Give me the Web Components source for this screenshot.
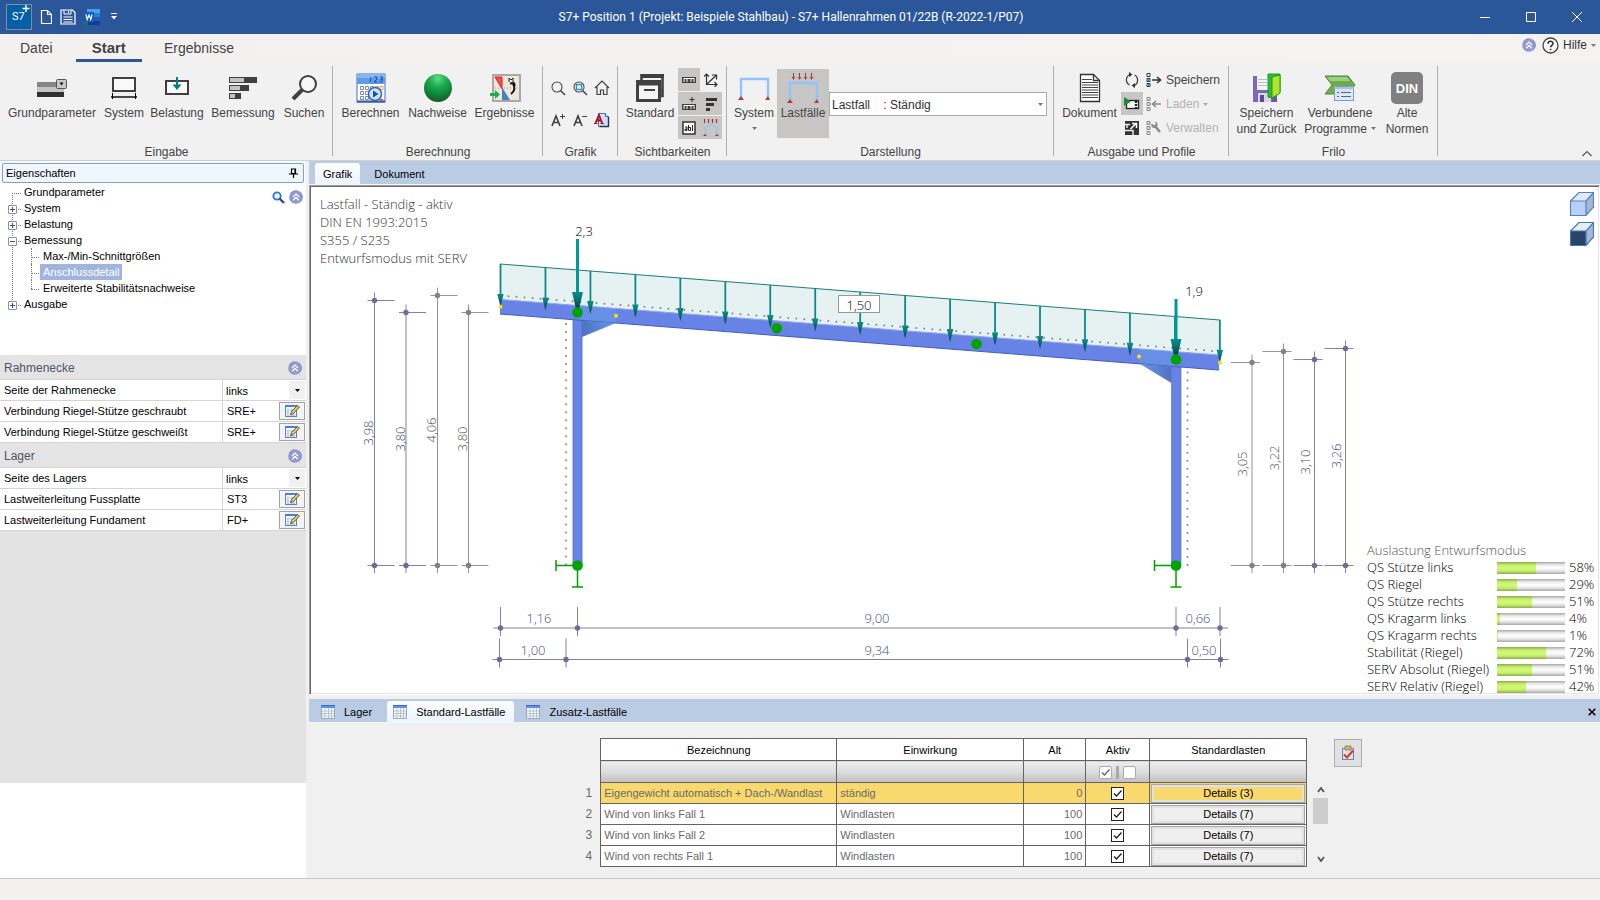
<!DOCTYPE html>
<html lang="de">
<head>
<meta charset="utf-8">
<title>S7+ Position 1 (Projekt: Beispiele Stahlbau) - S7+ Hallenrahmen 01/22B (R-2022-1/P07)</title>
<style>
html, body { margin: 0; height: 100%; background: #f0f0f0; }
body { font-family: "Liberation Sans", Arial, sans-serif; font-size: 11px; color: #000; }
</style>
</head>
<body>
<frilo-app></frilo-app>

<script>
/* ---------- icon registry: [width, height, markup] ---------- */
const ICONS = {
  app: [26, 26, `<rect x=".5" y=".5" width="25" height="25" fill="#0060aa" stroke="#8a8a86"/>
    <path d="M20 1v7M16.500 4.500h7" stroke="#fff" stroke-width="1.400"/>`],
  newdoc: [12, 16, `<path d="M1.500 1.500h6l4 4v9h-10zM7.500 1.500v4h4" fill="none" stroke="#fff" stroke-width="1.200"/>`],
  save: [16, 16, `<path d="M1 1h11.500l2.500 2.500v11.500h-14z" fill="none" stroke="#fff" stroke-width="1.200"/><path d="M4 1v4h7v-4M8.500 2v2M3.500 8h9M3.500 10.500h9M3.500 13h9" fill="none" stroke="#fff"/>`],
  word: [16, 16, `<path d="M3 0h13v4H3z" fill="#41a5ee"/><path d="M3 4h13v4H3z" fill="#2b7cd3"/><path d="M3 8h13v4H3z" fill="#185abd"/><path d="M3 12h13v4H3z" fill="#103f91"/><path d="M0 3h10v10H0z" fill="#185abd"/><path d="M2 5.500l1.200 5L5 6l1.800 4.500L8 5.500" fill="none" stroke="#fff" stroke-width="1.200"/><path d="M0 13h4v3H0z" fill="#0f7c6a"/>`],
  more: [6, 8, `<path d="M0 .5h6" stroke="#fff"/><path d="M0 3h6L3 6.500z" fill="#fff"/>`],
  min: [10, 10, `<path d="M0 5.500h10" stroke="#fff"/>`],
  max: [10, 10, `<path d="M.5.500h9v9h-9z" fill="none" stroke="#fff"/>`],
  close: [10, 10, `<path d="M0 0l10 10M10 0L0 10" stroke="#fff"/>`],
  up2: [14, 14, `<circle cx="7" cy="7" r="6.800" fill="#9699cd"/><circle cx="7" cy="7" r="6.200" fill="none" stroke="#6c9ad0" stroke-dasharray="6 5"/><path d="M4 7L7 4l3 3M4 10.300L7 7.300l3 3" fill="none" stroke="#fff" stroke-width="1.200"/>`],
  help: [17, 17, `<circle cx="8.500" cy="8.500" r="7.500" fill="#fdfdfd" stroke="#444" stroke-width="1.300"/><path d="M6 6.700C6 3.500 11 3.500 11 6.500 11 8.300 8.600 8.300 8.600 10.300M8.600 11.700v1.500" fill="none" stroke="#333" stroke-width="1.600"/>`],
  caret: [5, 3, `<path d="M0 0h5L2.500 3z" fill="#777"/>`],
  caretlight: [5, 3, `<path d="M0 0h5L2.500 3z" fill="#aaa"/>`],
  caretblack: [5, 3, `<path d="M0 0h5L2.500 3z" fill="#000"/>`],
  collapse: [12, 7, `<path d="M1.500 6L6 1.500 10.500 6" fill="none" stroke="#555" stroke-width="1.200"/>`],
  grund: [32, 20, `<path d="M1 4h27v5H1z" fill="#868686"/><path d="M1 9h27v5H1z" fill="#c4c4c4"/><path d="M1 14h27v5H1z" fill="#303030"/><rect x="20.500" y="1.500" width="10" height="9" rx="1" fill="#c8c8c8" stroke="#555"/><path d="M23.500 4.500h4l-2 3z" fill="#111"/>`],
  system: [28, 24, `<rect x="3" y="2" width="22" height="13" fill="#fafafa" stroke="#404040" stroke-width="2"/><path d="M1 21h26" stroke="#000" stroke-width="1.400"/><path d="M2.500 17v6M25.500 17v6" stroke="#000"/>`],
  belastung: [26, 24, `<rect x="2" y="5" width="22" height="13" fill="#fafafa" stroke="#404040" stroke-width="2"/><path d="M13 1v9" stroke="#00807c" stroke-width="2"/><path d="M8.500 8.500h9L13 14z" fill="#00807c"/>`],
  bemessung: [30, 24, `<rect x="1" y="1" width="28" height="6" fill="#404040"/><rect x="2" y="2" width="14" height="4" fill="#c4c4c4"/><rect x="1" y="9" width="20" height="6" fill="#404040"/><rect x="2" y="10" width="10" height="4" fill="#c4c4c4"/><rect x="1" y="17" width="12" height="6" fill="#404040"/><rect x="2" y="18" width="5" height="4" fill="#c4c4c4"/>`],
  suchen: [28, 28, `<circle cx="18" cy="10" r="8" fill="#f6f6f6" stroke="#404040" stroke-width="2"/><path d="M12.500 15.500L3 25" stroke="#404040" stroke-width="4"/>`],
  berechnen: [30, 30, `<rect x="1" y="1" width="28" height="28" fill="#fff" stroke="#3f73c4"/><rect x="1" y="1" width="28" height="10" fill="#5f9be8"/><rect x="1" y="1" width="28" height="4" fill="#86b6f0"/><path d="M1 28.500h28" stroke="#2d5fa8" stroke-width="2"/><path d="M15 4l-1 5M18 4h3v2l-3 3h3M24 4h3l-2 2.500h1.500l-1 2.500h-2" fill="none" stroke="#1d4f9c"/>
    <g fill="#fff" stroke="#7c8ca8"><path d="M4.500 13.500h3v3h-3zM9.500 13.500h3v3h-3zM14.500 13.500h3v3h-3zM4.500 18.500h3v3h-3zM9.500 18.500h3v3h-3zM4.500 23.500h3v3h-3zM9.500 23.500h3v3h-3z"/></g><path d="M19.500 13.500h3v3h-3zM24 13.500h3v3h-3z" fill="#fff" stroke="#e8a04c"/><circle cx="19" cy="21" r="6.500" fill="#cfe3fa" stroke="#2c6abf" stroke-width="1.500"/><path d="M17 17.500l5.500 3.500-5.500 3.500z" fill="#164f9e"/><path d="M24 26h3v1.500h-3z" fill="#d33"/>`],
  nachweise: [30, 30, `<defs><radialGradient id="g" cx=".5" cy=".15" r=".9"><stop offset="0" stop-color="#5fdc84"/><stop offset=".35" stop-color="#1bab4e"/><stop offset=".75" stop-color="#0d7a35"/><stop offset="1" stop-color="#2a4a1a"/></radialGradient></defs><circle cx="15" cy="15" r="14" fill="url(#g)"/>`],
  ergebnisse: [32, 30, `<rect x="4" y="2" width="27" height="26" fill="#ece7da" stroke="#a9a9a9" stroke-width="2"/><path d="M6 4h7v12z" fill="#ff4a4a" stroke="#c22"/><path d="M13 14v13h8z" fill="#4b82bd"/><path d="M3 15h27" stroke="#999" stroke-dasharray="1 2"/><path d="M20 9V5l2 2 2-2v4" fill="none" stroke="#222"/><path d="M24 11q3.500 6-2 10M21 10.500l4-.5 1 3" fill="none" stroke="#111" stroke-width="1.800"/><path d="M1 20h5v-3l5 4.500-5 4.500v-3H1z" fill="#1fae4f"/>`],
  mag: [15, 15, `<circle cx="6" cy="6" r="5" fill="none" stroke="#4a4a4a" stroke-width="1.100"/><path d="M9.500 9.500l4.500 4.500" stroke="#4a4a4a" stroke-width="1.600"/>`],
  magfit: [15, 15, `<circle cx="6" cy="6" r="5" fill="none" stroke="#4a4a4a" stroke-width="1.100"/><path d="M9.500 9.500l4.500 4.500" stroke="#4a4a4a" stroke-width="1.600"/><rect x="3.500" y="3.500" width="5" height="5" fill="#fff" stroke="#2090d0" stroke-width="1.400"/>`],
  home: [16, 16, `<path d="M1 8l7-7 7 7M3 7v7.500h3.500V10h3v4.500H13V7" fill="none" stroke="#404040" stroke-width="1.200"/>`],
  aplus: [14, 14, `<path d="M1 13L5 3l4 10M2.500 9.500h5" fill="none" stroke="#404040" stroke-width="1.600"/><path d="M11.500 1v5M9 3.500h5" stroke="#404040"/>`],
  aminus: [14, 14, `<path d="M1 13L5 3l4 10M2.500 9.500h5" fill="none" stroke="#404040" stroke-width="1.600"/><path d="M9 3.500h5" stroke="#404040"/>`],
  adoc: [16, 16, `<path d="M4.500 1.500h7l3 3v10h-10z" fill="#cfdff6" stroke="#5874ac"/><path d="M11.500 1.500v3h3" fill="#fff" stroke="#4464a0"/><path d="M14.500 5v9.500h-9" fill="none" stroke="#1f3568" stroke-width="1.400"/><path d="M1.500 11L5 3l3 8M3 8.500h4" fill="none" stroke="#a8141c" stroke-width="1.800"/><path d="M0 11.500h3.500M6.500 11.500H10" stroke="#a8141c"/>`],
  standard: [30, 30, `<path d="M6 2h23M6 4h23" stroke="#404040" stroke-width="2"/><path d="M6.500 1v6M27.500 1v22h-3" fill="none" stroke="#404040" stroke-width="2.600"/><rect x="2.500" y="8.500" width="22" height="19" fill="#f4f4f4" stroke="#404040" stroke-width="3"/><path d="M2 11h23" stroke="#404040" stroke-width="3"/><path d="M8 6.500h17" stroke="#f4f4f4"/><path d="M9 17h11" stroke="#404040" stroke-width="2"/>`],
  ruler: [14, 6, `<rect x="0" y="0" width="14" height="6" fill="#404040"/><path d="M1.500 1.500h11M2 5V2M5 5V2M9 5V2M12 5V2" stroke="#fff"/>`],
  rulerplus: [14, 14, `<rect x="0" y="7" width="14" height="6" fill="#404040"/><path d="M1.500 8.500h11M2 12V9M5 12V9M9 12V9M12 12V9" stroke="#fff"/><path d="M10 0v5M7.500 2.500h5" stroke="#333"/>`],
  axes: [14, 14, `<path d="M2.500 1v10.500h10M3 11L12 2.500M0 3.500L2.500 1 5 3.500M10.500 9l2.500 2.500L10.500 14M8 2h4.500v4.500" fill="none" stroke="#333" stroke-width="1.200"/>`],
  bars: [14, 14, `<path d="M2 1h11v3H2zM2 6h8v3H2zM2 11h4v3H2z" fill="#333"/>`],
  abl: [14, 14, `<rect x="1" y="1" width="12" height="12" fill="#fff" stroke="#333" stroke-width="1.500"/><path d="M3 6h2v3.500H3V8h2M6.500 4v5.500h2V6.500h-2M10.500 4v6" fill="none" stroke="#222"/>`],
  frameload: [18, 18, `<path d="M3.500 16V8.500L9 5.500l5.500 3V16" fill="none" stroke="#8ec4f5" stroke-width="1.400"/><path d="M2.500 0v4M6.500 0v4M10.500 0v4M14.500 0v4" stroke="#a33" stroke-width="1.200"/><path d="M3 15l2 2H1zM15 15l2 2h-4z" fill="#a33"/>`],
  sysframe: [32, 32, `<path d="M3 27V7h27v20" fill="none" stroke="#90c5fa" stroke-width="2.400"/><path d="M3 24l3 4H0zM30 24l2 4h-5z" fill="#b43c3c"/>`],
  lastframe: [32, 34, `<path d="M3 29V11h27v18" fill="none" stroke="#90c5fa" stroke-width="2.400"/><path d="M3 27l3 4H0zM30 27l2 4h-5z" fill="#b43c3c"/><path d="M6.500 1v6M12.500 1v6M18.500 1v6M24.500 1v6" stroke="#8e3a3a"/><path d="M4.500 5h4l-2 3zM10.500 5h4l-2 3zM16.500 5h4l-2 3zM22.500 5h4l-2 3z" fill="#b04848"/>`],
  dokument: [22, 30, `<path d="M1.500 1.500h13l6 6v21h-19z" fill="#fff" stroke="#333" stroke-width="1.300"/><path d="M14.500 1.500v6h6" fill="none" stroke="#333" stroke-width="1.300"/><path d="M3 6.500h10M3 9.500h16M3 12h16M3 14.500h16M3 17h16M3 19.500h16M3 22h16M3 24.500h16" stroke="#444"/>`],
  refresh: [14, 16, `<path d="M5 2.500A5.800 5.800 0 0 0 4.500 13M9 13.500A5.800 5.800 0 0 0 9.500 3" fill="none" stroke="#404040" stroke-width="1.300"/><path d="M4 0l3.500 2.500L4 5zM10 11L6.500 13.500 10 16z" fill="#333"/>`],
  film: [16, 14, `<rect x="2.500" y="3.500" width="12" height="8" fill="#fafafa" stroke="#222" stroke-width="1.300"/><path d="M12 4v7" stroke="#222" stroke-dasharray="2 1" stroke-width="2.400"/><path d="M0 0l7 4.500L0 9z" fill="#1c8a2c"/>`],
  expand: [14, 14, `<path d="M0 0h14v14H0z" fill="#333"/><path d="M0 3.500h5M2 3.500V7M4 9.500h4V14M0 9.500h4" fill="none" stroke="#eee" stroke-width="1.400"/><path d="M5.500 8L11 2.500M7 2.500h4.500V7" fill="none" stroke="#fff" stroke-width="1.500"/>`],
  pfsave: [16, 14, `<path d="M1 .500h3v3H1zM1 5.500h3v3H1zM1 10.500h3v3H1z" fill="#fff" stroke="#333"/><path d="M1.500 6h2v2h-2zM1.500 11h2v2h-2z" fill="#2aa4e8"/><path d="M6 7h8M11 4l3.500 3-3.500 3" fill="none" stroke="#333" stroke-width="1.600"/>`],
  pfload: [16, 14, `<path d="M1 .500h3v3H1zM1 5.500h3v3H1zM1 10.500h3v3H1z" fill="#ddd" stroke="#8a8a8a"/><path d="M7 7h8M10 4L6.500 7l3.500 3" fill="none" stroke="#8a8a8a" stroke-width="1.600"/>`],
  pfmanage: [16, 14, `<path d="M1 .500h3v3H1zM1 5.500h3v3H1zM1 10.500h3v3H1z" fill="#ddd" stroke="#8a8a8a"/><path d="M9 5l5 6" stroke="#8a8a8a" stroke-width="2.500"/><path d="M6 2.500L8 4.500 10 2.500 8.500.500q3 0 3 3.500T8 7 5.500 3z" fill="#8a8a8a"/>`],
  saveback: [30, 30, `<path d="M1 3h19v26H1z" fill="#7d68b6"/><path d="M20 14h5v15h-5z" fill="#6a57a6"/><rect x="5" y="3" width="12" height="14" fill="#f4f4f8"/><path d="M6 6.500h9M6 9.500h9M6 12.500h9" stroke="#bbb"/><rect x="6" y="20" width="13" height="9" fill="#d6d6e0"/><rect x="8" y="22" width="4" height="7" fill="#5a4a90"/><path d="M16 1h12v18l-7 6-5-1z" fill="#2dbb36" stroke="#12a020"/><path d="M20 4l8-2v18l-8 5z" fill="#b6e32a" stroke="#12a020"/>`],
  verbund: [34, 28, `<path d="M2 2h23l7 9-7 9H2l7-9z" fill="#6cab4e" stroke="#4b8a38"/><path d="M4 3h20l3 4H7z" fill="#9fd07e"/><rect x="11.500" y="12.500" width="19" height="14" fill="#dfeaf6" fill-opacity=".93" stroke="#7b9cc4"/><path d="M11.500 14h19" stroke="#a9c2e0" stroke-width="2"/><path d="M14 18.500h2M18 18.500h10M14 22.500h2M18 22.500h10" stroke="#4a6a9a"/>`],
  din: [32, 32, `<rect x="0" y="0" width="32" height="32" rx="5" fill="#808080"/>`],
  pin: [9, 10, `<path d="M2.500 1h4v4.500h-4zM0 6h9M4.500 6v4" fill="none" stroke="#000" stroke-width="1.200"/><path d="M6 1v5" stroke="#000"/>`],
  find: [13, 13, `<circle cx="5" cy="5" r="3.700" fill="#eaf4ff" stroke="#2c7cc0" stroke-width="1.800"/><path d="M7.500 7.500l4.500 4.500" stroke="#1f4fa0" stroke-width="2.400"/>`],
  edit: [18, 14, `<rect x="2.500" y="1.500" width="11" height="11" fill="#eef4fc" stroke="#5c83c4"/><path d="M2 1h12v2H2z" fill="#4a7fd8"/><path d="M4 6h2M4 8.500h2M4 11h2M7 6h4M7 11h5" stroke="#8aa8d8"/><path d="M7.500 10.500l1-3 6-6 2 1.500-6 6.500z" fill="#e8c46a" stroke="#4a3a20" stroke-width=".8"/>`],
  table: [14, 14, `<rect x=".5" y=".5" width="13" height="13" fill="#fff" stroke="#9aa8c0"/><path d="M0 0h14v3H0z" fill="#5f92e8"/><path d="M0 0h14v1H0z" fill="#3b6cc8"/><path d="M4 3v10M7.500 3v10M10.500 3v10M1 6h12M1 8.500h12M1 11h12" stroke="#b4c2d8"/>`],
  xblack: [8, 8, `<path d="M.7.700l6.600 6.600M7.300.700L.7 7.300" stroke="#000" stroke-width="1.600"/>`],
  clip: [14, 16, `<rect x="1.500" y="3.500" width="11" height="11" fill="#d8e4f6" stroke="#6a86be"/><path d="M4 1h6v4H4z" fill="#c8b27a" stroke="#8a7a4a" stroke-width=".8"/><path d="M3 9.500l3 3 6-7" fill="none" stroke="#e03818" stroke-width="2"/>`],
  sup: [8, 6, `<path d="M1 5l3-4 3 4" fill="none" stroke="#555" stroke-width="1.800"/>`],
  sdown: [8, 6, `<path d="M1 1l3 4 3-4" fill="none" stroke="#555" stroke-width="1.800"/>`],
  cube: [24, 24, `<path d="M1 9L9 1h15l-8 8z" fill="#e4e9f8"/><path d="M16 9l8-8v14l-8 8z" fill="#a9b4d4"/><path d="M1 9h15v14H1z" fill="#b9d0ff"/><path d="M.5 9L9 .5h14.500V15L16 23.500H.5zM.5 9H16M16 23.500V9L23.500.5" fill="none" stroke="#4a86c4" stroke-width="1.200"/>`],
  cubedark: [24, 24, `<path d="M1 9L9 1h15l-8 8z" fill="#e4edfa"/><path d="M16 9l8-8v14l-8 8z" fill="#a9b4d4"/><path d="M1 9h15v14H1z" fill="#2a4468"/><path d="M.5 9L9 .5h14.500V15L16 23.500H.5zM.5 9H16M16 23.500V9L23.500.5" fill="none" stroke="#3f7ab8" stroke-width="1.200"/>`]
};

const shadow = (el, css, html) => {
  const t = document.createElement('template');
  t.innerHTML = `<style>*{box-sizing:border-box}[hidden]{display:none}button,select,input{font:inherit;color:inherit;margin:0}${css}</style>${html}`;
  el.attachShadow({ mode: 'open' }).append(t.content.cloneNode(true));
};

class FriloIcon extends HTMLElement {
  connectedCallback() {
    if (this.shadowRoot) return;
    const [w, h, body] = ICONS[this.getAttribute('name')];
    shadow(this, `:host{display:inline-flex;flex:none}svg{display:block}`,
      `<svg width="${w}" height="${h}" viewBox="0 0 ${w} ${h}" aria-hidden="true">${body}</svg>`);
  }
}

class FriloTitlebar extends HTMLElement {
  constructor() {
    super();
    shadow(this, `
      :host{display:grid;grid-template-columns:1fr auto 1fr;align-items:center;height:34px;background:#2b579a;color:#fff;
        font:12px Roboto,"Open Sans",sans-serif}
      .quick{display:flex;align-items:center;gap:8px;padding-left:6px}
      button{display:flex;align-items:center;justify-content:center;border:0;padding:0;background:none}
      .app{display:grid}.app>*{grid-area:1/1}
      .app span{z-index:1;place-self:center start;padding-left:6px;font-size:11px;line-height:16px}
      .more{margin-left:3px}
      .win{display:flex;justify-content:flex-end}.win button{width:46px;height:34px}
      h1{margin:0 18px 0 0;font:inherit;white-space:nowrap}`,
      `<div class="quick"><div class="app"><frilo-icon name="app"></frilo-icon><span>S7</span></div>
        <button aria-label="Neu"><frilo-icon name="newdoc"></frilo-icon></button>
        <button aria-label="Speichern"><frilo-icon name="save"></frilo-icon></button>
        <button aria-label="Word"><frilo-icon name="word"></frilo-icon></button>
        <button class="more" aria-label="Anpassen"><frilo-icon name="more"></frilo-icon></button></div>
      <h1><slot></slot></h1>
      <div class="win"><button aria-label="Minimieren"><frilo-icon name="min"></frilo-icon></button>
        <button aria-label="Maximieren"><frilo-icon name="max"></frilo-icon></button>
        <button aria-label="Schließen"><frilo-icon name="close"></frilo-icon></button></div>`);
  }
}

class FriloMenu extends HTMLElement {
  constructor() {
    super();
    shadow(this, `
      :host{display:flex;height:28px;padding-left:5px;background:linear-gradient(90deg,#f3f1f0,#f5f3f2);color:#444;font-size:14px}
      nav{display:flex;flex:1}
      a{display:block;padding:0 15px;line-height:29px;color:inherit;text-decoration:none}
      a.on{margin:0 7px 0 8px;font-weight:bold;font-size:15px;padding:0 16px;border-bottom:3px solid #2b579a;line-height:28px;height:28px}
      .help{display:flex;align-items:center;gap:6px;padding:0 4px 6px 0;font-size:12px;color:#333}
      button{display:flex;align-items:center;gap:4px;border:0;padding:0;background:none}`,
      `<nav><a href="#datei">Datei</a><a class="on" href="#start">Start</a><a href="#ergebnisse">Ergebnisse</a></nav>
      <div class="help"><button aria-label="Einklappen"><frilo-icon name="up2"></frilo-icon></button>
      <button><frilo-icon name="help"></frilo-icon>Hilfe<frilo-icon name="caret"></frilo-icon></button></div>`);
  }
}

/* A labelled block of ribbon commands with a rule on its right */
class FriloGroup extends HTMLElement {
  constructor() {
    super();
    shadow(this, `
      :host{display:grid;flex:none;grid-template-rows:78px 16px;color:#444;
        background:linear-gradient(#b0b0b0,#b0b0b0) right top/1px 90px no-repeat}
      .row{display:flex;align-items:flex-start;padding:0 4px}
      .cap{text-align:center;line-height:16px}`,
      `<div class="row"><slot></slot></div><div class="cap"></div>`);
    this.shadowRoot.querySelector('.cap').textContent = this.getAttribute('label');
  }
}

/* Large ribbon command: icon over one or two lines of text */
class FriloCommand extends HTMLElement {
  constructor() {
    super();
    shadow(this, `
      :host{display:block;flex:none;margin-top:3px}
      button{display:flex;flex-direction:column;align-items:center;width:100%;height:69px;border:0;padding:3px 0 0;background:none;white-space:nowrap}
      :host([pressed]) button{background:#c8c6c4}
      .ico{display:grid;place-items:center;height:32px;margin-bottom:1px}
      .ico>*{grid-area:1/1}.ico span{z-index:1;color:#fff;font-weight:bold;font-size:13px}
      .txt{line-height:16px;text-align:center}
      .drop{padding-top:6px;line-height:3px}`,
      `<button><span class="ico"><frilo-icon name="${this.getAttribute('icon')}"></frilo-icon>${this.hasAttribute('mark') ? `<span>${this.getAttribute('mark')}</span>` : ''}</span>
       <span class="txt"><slot></slot></span>${this.hasAttribute('drop') ? '<frilo-icon class="drop" name="caret"></frilo-icon>' : ''}</button>`);
  }
}

/* Grid of small icon buttons */
class FriloTools extends HTMLElement {
  constructor() {
    super();
    const cells = this.getAttribute('icons').split(' ').map(s => {
      const on = s.endsWith('*');
      const n = s.replace('*', '');
      return `<button aria-label="${n}" ${on ? 'aria-pressed="true"' : ''}><frilo-icon name="${n}"></frilo-icon></button>`;
    }).join('');
    shadow(this, `
      :host{display:grid;flex:none;grid-template-columns:repeat(var(--cols),22px);grid-auto-rows:23px;row-gap:1px;padding-top:2px}
      :host([loose]){grid-auto-rows:32px;row-gap:0;padding-top:6px}
      button{display:grid;place-items:center;border:0;padding:0;background:none}
      [aria-pressed]{background:#c8c6c4}`, cells);
  }
}

class FriloRibbon extends HTMLElement {
  constructor() {
    super();
    shadow(this, `
      :host{display:flex;height:99px;padding-top:4px;background:#f1f1f1;border-bottom:1px solid #d2d0ce;font-size:12px}
      .w1{width:333px}.w2{width:210px}.w3{width:75px}.w4{width:109px}.w5{width:327px}.w6{width:175px}.w7{width:209px}
      .choice{display:grid;align-items:center;width:218px;height:24px;margin-top:26px;color:#333}
      .choice>*{grid-area:1/1}
      select{width:100%;height:24px;border:1px solid #ababab;background:#fff;padding:1px 2px 0;appearance:none}
      .choice frilo-icon{justify-self:end;margin-right:4px;pointer-events:none}
      .profile{display:grid;grid-auto-rows:24px;padding:2px 0 0 3px}
      .profile button{display:flex;align-items:center;gap:4px;border:0;padding:0;background:none}
      .profile button:disabled{color:#b4b2b0}
      .fold{display:flex;align-items:flex-end;justify-content:flex-end;flex:1;padding:0 7px 3px 0}
      .fold button{border:0;padding:0;background:none;display:flex}
      .inl{vertical-align:middle;margin:0 0 3px 4px}`,
      `<frilo-group class="w1" label="Eingabe">
        <frilo-command icon="grund" style="width:96px">Grundparameter</frilo-command>
        <frilo-command icon="system" style="width:48px">System</frilo-command>
        <frilo-command icon="belastung" style="width:58px">Belastung</frilo-command>
        <frilo-command icon="bemessung" style="width:74px">Bemessung</frilo-command>
        <frilo-command icon="suchen" style="width:48px">Suchen</frilo-command></frilo-group>
      <frilo-group class="w2" label="Berechnung">
        <frilo-command icon="berechnen" style="width:67px">Berechnen</frilo-command>
        <frilo-command icon="nachweise" style="width:67px">Nachweise</frilo-command>
        <frilo-command icon="ergebnisse" style="width:67px">Ergebnisse</frilo-command></frilo-group>
      <frilo-group class="w3" label="Grafik">
        <frilo-tools loose style="--cols:3" icons="mag magfit home aplus aminus adoc"></frilo-tools></frilo-group>
      <frilo-group class="w4" label="Sichtbarkeiten">
        <frilo-command icon="standard" style="width:56px">Standard</frilo-command>
        <frilo-tools style="--cols:2" icons="ruler* axes rulerplus* bars* abl* frameload*"></frilo-tools></frilo-group>
      <frilo-group class="w5" label="Darstellung">
        <frilo-command icon="sysframe" drop style="width:46px">System</frilo-command>
        <frilo-command icon="lastframe" pressed style="width:52px">Lastfälle</frilo-command>
        <div class="choice"><select aria-label="Lastfall"><option>Lastfall&nbsp;&nbsp;&nbsp; : Ständig</option></select><frilo-icon name="caret"></frilo-icon></div></frilo-group>
      <frilo-group class="w6" label="Ausgabe und Profile">
        <frilo-command icon="dokument" style="width:63px">Dokument</frilo-command>
        <frilo-tools style="--cols:1" icons="refresh film* expand"></frilo-tools>
        <div class="profile"><button><frilo-icon name="pfsave"></frilo-icon>Speichern</button>
          <button disabled><frilo-icon name="pfload"></frilo-icon>Laden<frilo-icon name="caretlight"></frilo-icon></button>
          <button disabled><frilo-icon name="pfmanage"></frilo-icon>Verwalten</button></div></frilo-group>
      <frilo-group class="w7" label="Frilo">
        <frilo-command icon="saveback" style="width:67px">Speichern<br>und Zurück</frilo-command>
        <frilo-command icon="verbund" style="width:80px">Verbundene<br>Programme<frilo-icon class="inl" name="caret"></frilo-icon></frilo-command>
        <frilo-command icon="din" mark="DIN" style="width:54px">Alte<br>Normen</frilo-command></frilo-group>
      <div class="fold"><button aria-label="Menüband reduzieren"><frilo-icon name="collapse"></frilo-icon></button></div>`);
  }
}

class FriloTree extends HTMLElement {
  constructor() {
    super();
    shadow(this, `
      :host{display:flex;align-items:flex-start;height:172px;padding:1px 3px 0 0;background:#fff}
      ul{list-style:none;margin:0;padding:0 0 0 12px;flex:1}
      li{position:relative;padding-left:12px;line-height:16px;white-space:nowrap}
      li::before{content:"";position:absolute;left:0;top:9px;width:9px;border-top:1px dotted #777}
      li::after{content:"";position:absolute;left:0;top:9px;bottom:-8px;border-left:1px dotted #777}
      li:last-child::after{display:none}
      ul ul{padding-left:7px}ul ul li::after{top:0;bottom:0}
      ul ul li:last-child::after{display:block;bottom:7px}
      ul ul li::before{width:8px}
      button{position:absolute;z-index:1;left:-4px;top:5px;width:9px;height:9px;border:1px solid #919191;border-radius:1px;padding:0;
        background:linear-gradient(#2f4f9f,#2f4f9f) center/5px 1px no-repeat,linear-gradient(#2f4f9f,#2f4f9f) center/1px 5px no-repeat,#fff}
      button.open{background:linear-gradient(#2f4f9f,#2f4f9f) center/5px 1px no-repeat,#fff}
      .sel{display:inline-block;margin-left:-3px;padding:0 3px;background:#9fb5dd;color:#fff}
      .tools{display:flex;align-items:center;gap:4px;padding-top:6px}
      .tools button{all:unset;display:flex}`,
      `<ul role="tree"><li role="treeitem">Grundparameter</li>
        <li role="treeitem"><button aria-label="Öffnen"></button>System</li>
        <li role="treeitem"><button aria-label="Öffnen"></button>Belastung</li>
        <li role="treeitem"><button class="open" aria-label="Schließen"></button>Bemessung
          <ul role="group"><li role="treeitem">Max-/Min-Schnittgrößen</li><li role="treeitem" aria-selected="true"><span class="sel">Anschlussdetail</span></li><li role="treeitem">Erweiterte Stabilitätsnachweise</li></ul></li>
        <li role="treeitem"><button aria-label="Öffnen"></button>Ausgabe</li></ul>
      <div class="tools"><button aria-label="Suchen"><frilo-icon name="find"></frilo-icon></button><button aria-label="Einklappen"><frilo-icon name="up2"></frilo-icon></button></div>`);
  }
}

/* Collapsible block of properties; rows are "label|value|kind", parted by semicolons */
class FriloProps extends HTMLElement {
  constructor() {
    super();
    const rows = this.getAttribute('rows').split(';').map((r, i) => {
      const [label, value, kind] = r.split('|');
      return kind === 'select'
        ? `<div class="r"><label for="f${i}">${label}</label><div class="v"><select id="f${i}"><option>${value}</option></select><span class="dd"><frilo-icon name="caretblack"></frilo-icon></span></div></div>`
        : `<div class="r"><span class="l">${label}</span><div class="v"><span class="t">${value}</span><button aria-label="${label} bearbeiten"><frilo-icon name="edit"></frilo-icon></button></div></div>`;
    }).join('');
    shadow(this, `
      :host{display:block}
      header{display:flex;align-items:center;justify-content:space-between;height:25px;padding:1px 4px 0;background:#e4e4e4;color:#4e5566;font-size:12px;border-bottom:1px solid #d4d4d4}
      header button{border:0;padding:0;background:none;display:flex}
      .r{display:grid;grid-template-columns:222px 1fr;height:21px;background:#fff;border-bottom:1px solid #d4d4d4;line-height:20px}
      label,.l{padding-left:4px;white-space:nowrap}
      .v{display:grid;grid-template-columns:1fr auto;border-left:1px solid #d4d4d4}
      .t{padding-left:4px}
      select{grid-area:1/1/2/3;appearance:none;border:0;background:none;padding:1px 0 0 3px;height:20px}
      .dd{grid-area:1/2;display:grid;place-items:center;width:16px;margin:1px;background:#f0f0f0;pointer-events:none}
      .v button{display:grid;place-items:center;width:26px;height:18px;margin:1px;border:1px solid #a0a0a0;background:#f4f4f4;padding:0;overflow:hidden}`,
      `<header><span>${this.getAttribute('label')}</span><button aria-label="Einklappen"><frilo-icon name="up2"></frilo-icon></button></header>${rows}`);
  }
}

class FriloSidebar extends HTMLElement {
  constructor() {
    super();
    shadow(this, `
      :host{display:flex;flex-direction:column;min-height:0;overflow:hidden;background:#e3e3e3}
      .head{background:#f5f9fe;padding:2px 2px 0}
      .head div{display:flex;align-items:center;justify-content:space-between;height:20px;border:1px solid #7da2ce;border-radius:2px;background:#eff6fd;padding:0 5px 0 3px}
      .head button{border:0;padding:0;background:none;display:flex}
      .rest{flex:1}.foot{height:95px;background:#fff}`,
      `<div class="head"><div><span>Eigenschaften</span><button aria-label="Anheften"><frilo-icon name="pin"></frilo-icon></button></div></div>
      <frilo-tree></frilo-tree>
      <frilo-props label="Rahmenecke" rows="Seite der Rahmenecke|links|select;Verbindung Riegel-Stütze geschraubt|SRE+;Verbindung Riegel-Stütze geschweißt|SRE+"></frilo-props>
      <frilo-props label="Lager" rows="Seite des Lagers|links|select;Lastweiterleitung Fussplatte|ST3;Lastweiterleitung Fundament|FD+"></frilo-props>
      <div class="rest"></div><div class="foot"></div>`);
  }
}

/* Tab strip: tabs given as "a,b,c", index of the open one in "open" */
class FriloTabs extends HTMLElement {
  constructor() {
    super();
    const open = +this.getAttribute('open');
    const icon = this.hasAttribute('icons') ? '<frilo-icon name="table"></frilo-icon>' : '';
    shadow(this, `
      :host{display:flex;align-items:flex-end;height:24px;background:#bacce4;border-bottom:1px solid #f4f6fa;padding:0 4px 0 6px}
      button{display:flex;align-items:center;gap:9px;height:21px;border:0;border-radius:3px 3px 0 0;padding:0 8px;margin-right:6px;background:none;line-height:16px}
      :host([icons]) button{padding:0 9px 0 6px;margin-right:6px}
      [aria-selected=true]{background:linear-gradient(#fcfdff,#edf4fc)}
      :host([icons]) .x{margin:0 0 0 auto;padding:0}`,
      this.getAttribute('tabs').split(',').map((t, i) => `<button role="tab" aria-selected="${i === open}">${icon}${t}</button>`).join('') +
      (icon ? '<button class="x" aria-label="Schließen"><frilo-icon name="xblack"></frilo-icon></button>' : ''));
  }
}

class FriloMeter extends HTMLElement {
  constructor() {
    super();
    const v = this.getAttribute('value');
    shadow(this, `
      :host{display:grid;grid-template-columns:130px 68px 28px;height:17px;align-items:center;line-height:17px;white-space:nowrap}
      .bar{height:12px;background:linear-gradient(#a8a8a8,#ececec 25%,#fff 50%,#e4e4e4 75%,#a8a8a8)}
      .bar i{display:block;height:12px;width:${v}%;background:linear-gradient(#8cab4a,#c5ee6c 25%,#d2fa7a 50%,#c5ee6c 75%,#8cab4a)}
      .p{padding-left:4px}`,
      `<span><slot></slot></span><div class="bar" role="meter" aria-valuenow="${v}"><i></i></div><span class="p">${v}%</span>`);
  }
}

/* Drawing of the frame with loads, dimensions and supports */
class FriloDrawing extends HTMLElement {
  constructor() {
    super();
    const P = '#6e6c98', G = '#828282';
    const ink = { [P]: '#4c4a80', [G]: '#555' };
    const L = (x1, y1, x2, y2, c, w = 1) => `<path d="M${x1} ${y1}L${x2} ${y2}" stroke="${c}" stroke-width="${w}"/>`;
    const dot = (x, y, r, c) => `<circle cx="${x}" cy="${y}" r="${r}" fill="${c}"/>`;
    const label = (x, y, t, c, rot) => `<text x="${x}" y="${y}" fill="${ink[c] || c}" text-anchor="middle" ${rot ? `transform="rotate(-90 ${x} ${y})"` : ''}>${t}</text>`;
    const vdim = (x, top, t, tx, ty, c, a, b) =>
      `<g opacity=".85">${L(x, top - 8, x, 573, c)}${L(x - a, top, x + b, top, c)}${L(x - a, 565.500, x + b, 565.500, c)}</g>${dot(x, top, 2.700, c)}${dot(x, 565.500, 2.700, c)}${label(tx + 4, ty, t, c, true)}`;
    const hdim = (y, xs, texts, txs) =>
      `<g opacity=".85">${L(xs[0] - 7, y, xs[3] + 8, y, P)}${xs.map(x => L(x, y - 21, x, y + 8, P)).join('')}</g>${xs.map(x => dot(x, y, 2.700, P)).join('')}${texts.map((t, i) => label(txs[i], y - 5, t, P)).join('')}`;
    const arrow = (x, y) => L(x, y, x, y + 32, '#0b8a88', 1.800) + `<path d="M${x - 3.200} ${y + 30}h6.400l-3.200 13z" fill="url(#tip)"/>`;
    const big = (x, y, tip) => L(x, y, x, tip - 12, '#009a96', 3) + `<path d="M${x - 5.500} ${tip - 17}h11l-4 17h-3z" fill="url(#tip)"/>`;
    const support = x => `<g stroke="#00a000" fill="none" stroke-width="1.500"><path d="M${x} 565.500h-21.500m0-5.500v11M${x} 565.500V587m-5.500 0h11"/></g>`;
    let arrows = '';
    for (let i = 0; i <= 16; i++) arrows += arrow(500.500 + 44.960 * i, 264 + 3.490 * i);

    const svg = `<svg viewBox="311 187 1287 506" preserveAspectRatio="xMidYMid meet" role="img" aria-label="Hallenrahmen">
      <defs><linearGradient id="tip" x1="0" y1="0" x2="0" y2="1"><stop offset="0" stop-color="#0a8f8c"/><stop offset=".4" stop-color="#087472"/><stop offset="1" stop-color="#083c3c"/></linearGradient>
      <linearGradient id="h1"><stop offset="0" stop-color="#4f72c0"/><stop offset="1" stop-color="#6a96ea"/></linearGradient>
      <linearGradient id="h2"><stop offset="0" stop-color="#6a96ea"/><stop offset="1" stop-color="#4f72c0"/></linearGradient></defs>
      ${vdim(374.500, 300.500, '3,98', 369, 433, P, 7, 20)}${vdim(406, 312.500, '3,80', 401, 439, P, 7, 20)}
      ${vdim(437.500, 295.500, '4,06', 432, 430, G, 7, 20)}${vdim(468.500, 312.500, '3,80', 463, 439, G, 7, 20)}
      ${vdim(1252, 362.500, '3,05', 1243, 464, G, 21, 8)}${vdim(1283.500, 351.500, '3,22', 1275, 458, G, 21, 8)}
      ${vdim(1314.500, 359.500, '3,10', 1306, 462, P, 21, 8)}${vdim(1345.500, 348.500, '3,26', 1337, 456, P, 21, 8)}
      ${hdim(628, [500.500, 577.500, 1176, 1220], ['1,16', '9,00', '0,66'], [539, 877, 1198])}
      ${hdim(659.500, [499.500, 566, 1187.500, 1220.500], ['1,00', '9,34', '0,50'], [533, 877, 1204])}
      <path d="M500 264L1220 320V356L500 300z" fill="#e6f2f2"/>
      <path d="M500 264L1220 320" stroke="#1a7c7a" stroke-width="1"/>
      <path d="M573 316h9V565h-9zM1171.700 362h9.200V565h-9.200z" fill="#6883e6"/>
      <path d="M573 316V565M582 316V565M1171.700 364V565M1180.900 364V565" stroke="#4b66cc" stroke-width=".8"/>
      <path d="M500 299.500L1219 355v15L500 314z" fill="#6883e6"/>
      <path d="M577 305.500L616 308.500v14.500L577 320zM1139 349L1176 352v14.800L1139 363.800z" fill="#6690e6"/>
      <path d="M500 314L1219 370" stroke="#3f5cc0" stroke-width="1"/><path d="M500 299.500L1219 355" stroke="#8da4f0"/>
      <path d="M582 320.500L616 323 582 337z" fill="url(#h1)"/><path d="M1171.500 366.500L1140 364l31.500 19z" fill="url(#h2)"/>
      <g stroke="#858585" stroke-width="2" stroke-linecap="round" stroke-dasharray="0 8.020"><path d="M508.500 296.200L1213 351M566 324V566M1187.500 372.500V566"/></g>
      ${arrows}${big(577.500, 239, 309)}${big(1176, 299, 356)}
      ${support(577.500)}${support(1176)}
      ${[[577.500, 312.500], [776.800, 328.200], [976.500, 344], [1176, 359.500], [577.500, 565.500], [1176, 565.500]].map(p => dot(p[0], p[1], 5.300, '#00a400')).join('')}
      ${[[500.500, 306.800], [616, 315.800], [1139, 356.500], [1220, 362.800]].map(p => dot(p[0], p[1], 2, '#ffe000')).join('')}
      <rect x="838.500" y="295.500" width="41" height="17" fill="#fff" stroke="#999"/>
      ${label(859, 310, '1,50', '#000')}${label(584, 236, '2,3', '#000')}${label(1194, 296, '1,9', '#000')}
    </svg>`;
    const meters = [['QS Stütze links', 58], ['QS Riegel', 29], ['QS Stütze rechts', 51], ['QS Kragarm links', 4], ['QS Kragarm rechts', 1], ['Stabilität (Riegel)', 72], ['SERV Absolut (Riegel)', 51], ['SERV Relativ (Riegel)', 42]];
    shadow(this, `
      :host{display:grid;grid-template:minmax(0,1fr)/minmax(0,1fr);min-height:0;background:#fff;padding:1px;
        border:1px solid;border-color:#a0a0a0 #fff #fff #a0a0a0;box-shadow:inset 1px 1px #696969,inset -1px -1px #e3e3e3;
        font:300 13px "Open Sans","Noto Sans",sans-serif}
      :host>*{grid-area:1/1}
      svg{width:100%;height:100%;display:block}
      .info{place-self:start;margin:8px 0 0 9px;color:#333;line-height:18px}
      .info p,.use p{margin:0}
      .views{place-self:start end;display:grid;gap:6px;margin:5px 4px 0 0}
      .views button{border:0;padding:0;background:none;display:flex}
      .use{place-self:end;margin:0 4px -2px 0;color:#000;width:227px}
      .use p{line-height:17px;color:#555}`,
      `${svg}<div class="info"><p>Lastfall - Ständig - aktiv</p><p>DIN EN 1993:2015</p><p>S355 / S235</p><p>Entwurfsmodus mit SERV</p></div>
      <div class="views"><button aria-label="Ansicht hell"><frilo-icon name="cube"></frilo-icon></button><button aria-label="Ansicht dunkel"><frilo-icon name="cubedark"></frilo-icon></button></div>
      <div class="use"><p>Auslastung Entwurfsmodus</p>${meters.map(m => `<frilo-meter value="${m[1]}">${m[0]}</frilo-meter>`).join('')}</div>`);
  }
}

class FriloLoads extends HTMLElement {
  constructor() {
    super();
    const rows = [['Eigengewicht automatisch + Dach-/Wandlast', 'ständig', 0, 3], ['Wind von links Fall 1', 'Windlasten', 100, 7], ['Wind von links Fall 2', 'Windlasten', 100, 7], ['Wind von rechts Fall 1', 'Windlasten', 100, 7]];
    const tick = c => `url("data:image/svg+xml,%3Csvg xmlns='http://www.w3.org/2000/svg' width='11' height='11'%3E%3Cpath d='M2 5.500L4.500 8 9.500 2.500' fill='none' stroke='%23${c}' stroke-width='1.300'/%3E%3C/svg%3E")`;
    shadow(this, `
      :host{display:grid;grid-template-columns:minmax(0,1fr) auto minmax(0,1fr);height:155px;padding:15px 25px 0 0;background:#f0f0f0}
      table{grid-column:2;border-collapse:collapse;table-layout:fixed;width:730px;height:129px}
      th,td{border:1px solid #646464;padding:0 3px;height:21px;background:#fff;color:#6a6a6a;font-weight:normal;white-space:nowrap;line-height:14px}
      thead th{height:22px;color:#000}
      .n{border-width:0 1px 0 0;background:none;text-align:right;padding-right:8px;font-size:12px}
      .f th{background:linear-gradient(#eee,#dcdcdc 50%,#c0c0c0)}
      .f th.n,thead th.n{background:none}
      td{text-align:left}.a{text-align:right}.c{text-align:center}
      .on td:not(.n){background:#f9d86d}
      td.b{padding:0 1px}
      td button{display:block;width:100%;height:19px;border:1px solid #a6a6a6;background:#efefef;box-shadow:inset 0 0 0 2px #e1e1e1;padding:0;color:#000;line-height:14px}
      .on button{background:#f9d86d}
      input{appearance:none;display:inline-block;width:13px;height:13px;border:1px solid #222;background:#fff;vertical-align:middle}
      input:checked{background:#fff ${tick('222')} center no-repeat}
      .f input{border:1px solid #aaa;border-radius:2px}.f input:checked{background-image:${tick('666')}}
      .f i{display:inline-block;width:3px;height:13px;margin:0 4px;background:#aaa;vertical-align:middle}
      .side{display:flex;align-items:flex-start}
      .scroll{display:flex;flex-direction:column;width:15px;height:86px;margin:43px 6px 0;background:#f0f0f0}
      .scroll button{display:grid;place-items:center;height:17px;border:0;padding:0;background:none}
      .thumb{height:26px;background:#cdcdcd;margin-bottom:auto}
      .clip{display:grid;place-items:center;width:28px;height:28px;margin-top:1px;border:1px solid #adadad;background:#e1e1e1;padding:0}`,
      `<table><colgroup><col style="width:24px"><col style="width:236px"><col style="width:187px"><col style="width:62px"><col style="width:64px"><col style="width:157px"></colgroup>
      <thead><tr><th class="n"></th><th>Bezeichnung</th><th>Einwirkung</th><th>Alt</th><th>Aktiv</th><th>Standardlasten</th></tr>
      <tr class="f"><th class="n"></th><th></th><th></th><th></th><th><input type="checkbox" checked aria-label="Alle aktiv"><i></i><input type="checkbox" aria-label="Alle inaktiv"></th><th></th></tr></thead>
      <tbody>${rows.map((r, i) => `<tr class="${i ? '' : 'on'}"><td class="n">${i + 1}</td><td>${r[0]}</td><td>${r[1]}</td><td class="a">${r[2]}</td><td class="c"><input type="checkbox" checked aria-label="Aktiv ${i + 1}"></td><td class="b"><button>Details (${r[3]})</button></td></tr>`).join('')}</tbody></table>
      <div class="side"><div class="scroll"><button aria-label="Nach oben"><frilo-icon name="sup"></frilo-icon></button><div class="thumb"></div><button aria-label="Nach unten"><frilo-icon name="sdown"></frilo-icon></button></div>
      <button class="clip" aria-label="Übernehmen"><frilo-icon name="clip"></frilo-icon></button></div>`);
  }
}

class FriloApp extends HTMLElement {
  constructor() {
    super();
    shadow(this, `
      :host{display:grid;grid-template-rows:auto auto auto minmax(0,1fr) 22px;height:100vh;min-height:700px;background:#f0f0f0}
      main{display:grid;grid-template-columns:306px minmax(0,1fr);column-gap:3px;min-height:0}
      .work{display:grid;grid-template-rows:auto minmax(0,1fr) 4px auto auto;min-height:0;min-width:0}
      .work frilo-drawing{grid-row:2}.work .low{grid-row:4}.work frilo-loads{grid-row:5}
      footer{background:#f2f1f0;border-top:1px solid #c8c8c8}`,
      `<frilo-titlebar>S7+ Position 1 (Projekt: Beispiele Stahlbau) - S7+ Hallenrahmen 01/22B (R-2022-1/P07)</frilo-titlebar>
      <frilo-menu></frilo-menu><frilo-ribbon></frilo-ribbon>
      <main><frilo-sidebar></frilo-sidebar>
        <section class="work"><frilo-tabs tabs="Grafik,Dokument" open="0"></frilo-tabs><frilo-drawing></frilo-drawing>
          <frilo-tabs class="low" icons tabs="Lager,Standard-Lastfälle,Zusatz-Lastfälle" open="1"></frilo-tabs><frilo-loads></frilo-loads></section></main>
      <footer></footer>`);
  }
}

const defs = { 'frilo-icon': FriloIcon, 'frilo-titlebar': FriloTitlebar, 'frilo-menu': FriloMenu, 'frilo-group': FriloGroup, 'frilo-command': FriloCommand, 'frilo-tools': FriloTools, 'frilo-ribbon': FriloRibbon, 'frilo-tree': FriloTree, 'frilo-props': FriloProps, 'frilo-sidebar': FriloSidebar, 'frilo-tabs': FriloTabs, 'frilo-meter': FriloMeter, 'frilo-drawing': FriloDrawing, 'frilo-loads': FriloLoads, 'frilo-app': FriloApp };
/* the app element is registered first so that its children upgrade with their attributes present */
Object.entries(defs).reverse().forEach(([name, cls]) => customElements.define(name, cls));
</script>
</body>
</html>
